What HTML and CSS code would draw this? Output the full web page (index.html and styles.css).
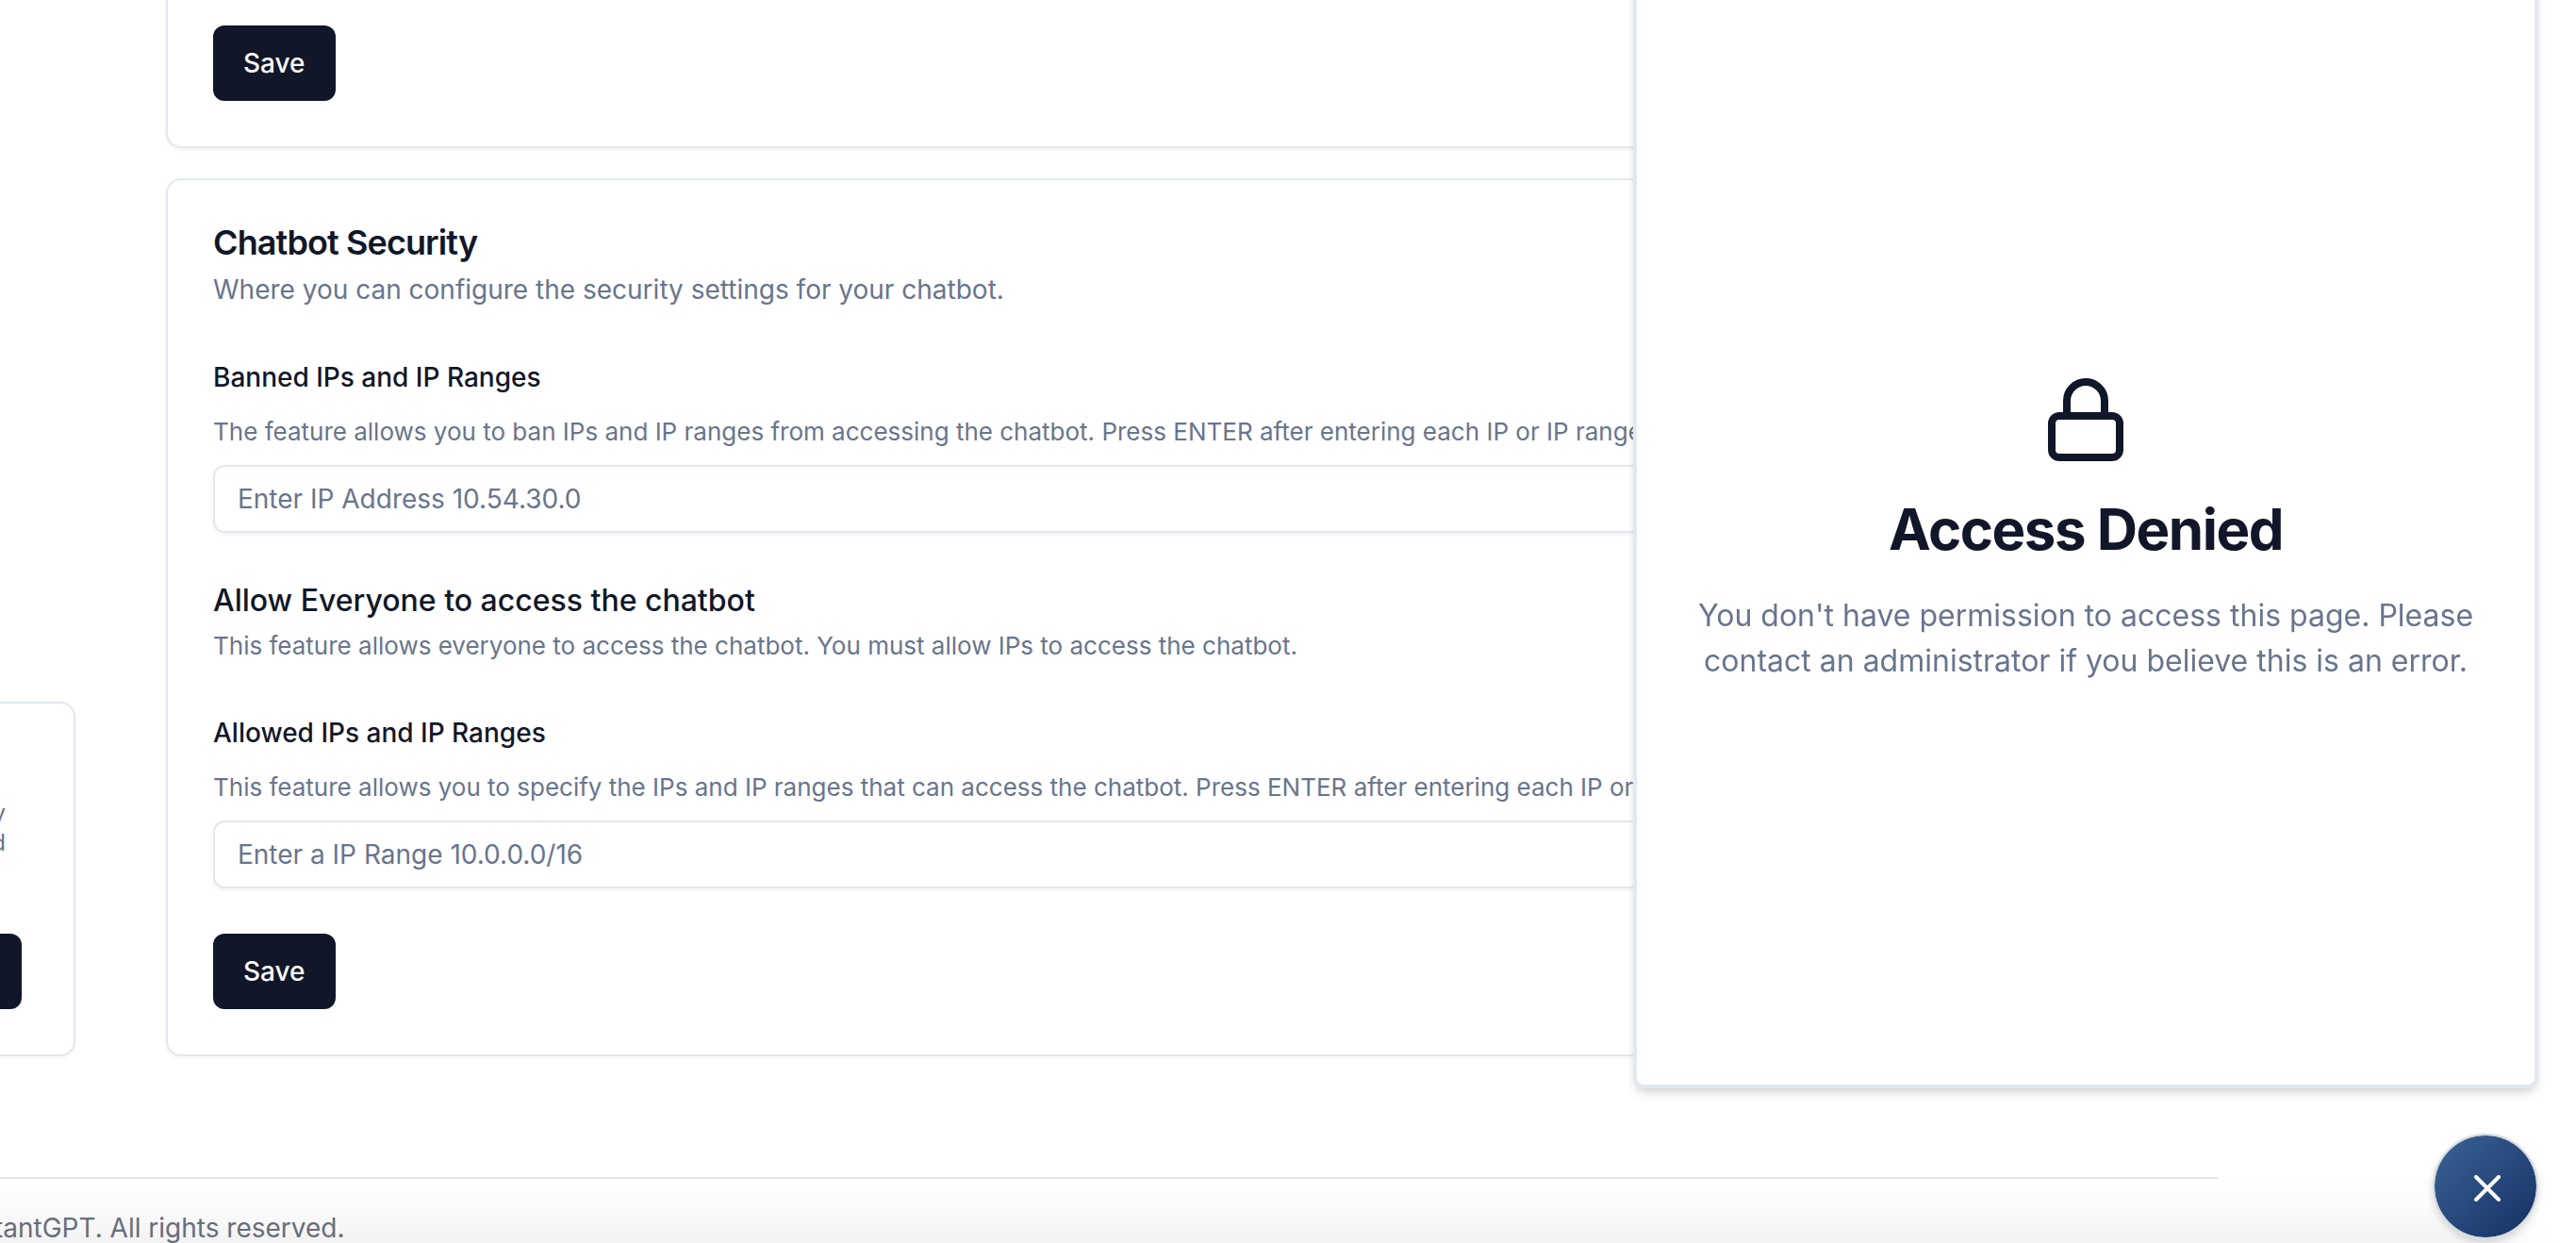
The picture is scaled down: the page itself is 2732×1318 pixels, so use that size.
FILE: index.html
```html
<!DOCTYPE html>
<html lang="en">
<head>
<meta charset="utf-8">
<title>Chatbot Settings</title>
<link rel="stylesheet" href="styles.css">
</head>
<body>
<div class="page">
  <div class="layout">
    <aside class="card promo">
      <p class="promo-text">y<br>d</p>
      <button class="btn btn-wide" type="button" aria-label="Upgrade"></button>
    </aside>
    <main class="sections">
      <section class="card card-continued">
        <button class="btn" type="submit">Save</button>
      </section>
      <form class="card">
        <header class="card-header">
          <h2 class="card-title">Chatbot Security</h2>
          <p class="card-subtitle">Where you can configure the security settings for your chatbot.</p>
        </header>
        <div class="field">
          <label class="label" for="banned">Banned IPs and IP Ranges</label>
          <p class="hint">The feature allows you to ban IPs and IP ranges from accessing the chatbot. Press ENTER after entering each IP or IP range to add it.</p>
          <input class="input" id="banned" type="text" placeholder="Enter IP Address 10.54.30.0">
        </div>
        <div class="option">
          <h3 class="option-title">Allow Everyone to access the chatbot</h3>
          <p class="hint">This feature allows everyone to access the chatbot. You must allow IPs to access the chatbot.</p>
        </div>
        <div class="field">
          <label class="label" for="allowed">Allowed IPs and IP Ranges</label>
          <p class="hint">This feature allows you to specify the IPs and IP ranges that can access the chatbot. Press ENTER after entering each IP or IP range to add it.</p>
          <input class="input" id="allowed" type="text" placeholder="Enter a IP Range 10.0.0.0/16">
        </div>
        <button class="btn" type="submit">Save</button>
      </form>
    </main>
  </div>
  <footer class="footer">
    <p class="copyright">tantGPT. All rights reserved.</p>
  </footer>
</div>
<div class="edge-shadow"></div>
<section class="chat-panel">
  <svg class="lock" viewBox="0 0 24 24" fill="none" stroke="currentColor" stroke-width="2" stroke-linecap="round" stroke-linejoin="round" aria-hidden="true">
    <rect x="3" y="11" width="18" height="11" rx="2"/>
    <path d="M7 11V7a5 5 0 0 1 10 0v4"/>
  </svg>
  <h1 class="denied-title">Access Denied</h1>
  <p class="denied-text">You don't have permission to access this page. Please contact an administrator if you believe this is an error.</p>
</section>
<button class="chat-toggle" type="button" aria-label="Close chat">
  <svg class="close" viewBox="0 0 28 28" fill="none" stroke="currentColor" stroke-width="4" stroke-linecap="round" aria-hidden="true">
    <path d="M2 2l24 24M26 2L2 26"/>
  </svg>
</button>
</body>
</html>
```
FILE: styles.css
```css
* { box-sizing: border-box; margin: 0; }

body {
  background: #fff;
  color: #111729;
  font-family: Inter, "Liberation Sans", sans-serif;
  font-size: 28px;
  line-height: 40px;
  min-height: 100vh;
  overflow: hidden;
}

.page { padding-right: 380px; }

.layout {
  display: grid;
  grid-template-columns: 80px minmax(0, 1fr);
  gap: 96px;
}

.sections {
  display: flex;
  flex-direction: column;
  gap: 32px;
}

.card {
  display: flex;
  flex-direction: column;
  align-items: flex-start;
  gap: 48px;
  padding: 48px;
  background: #fff;
  border: 2px solid #e2e8ee;
  border-radius: 16px;
  box-shadow: 0 2px 4px rgb(0 0 0 / 5%);
}

.card-continued {
  padding-top: 27px;
  border-top: 0;
  border-top-left-radius: 0;
  border-top-right-radius: 0;
}

.promo {
  align-self: end;
  justify-content: space-between;
  height: 376px;
  padding: 100px 55px 48px 0;
  border-left: 0;
  border-top-left-radius: 0;
  border-bottom-left-radius: 0;
}

.promo-text {
  width: 6px;
  display: flex;
  justify-content: flex-end;
  text-align: right;
  color: #68758d;
  font-size: 24px;
  line-height: 32px;
}

.btn {
  height: 80px;
  padding: 0 32px;
  border: 0;
  border-radius: 12px;
  background: #111729;
  color: #f8fafc;
  font: 500 28px/40px Inter, "Liberation Sans", sans-serif;
}

.btn-wide {
  width: 100%;
  padding: 0;
  border-top-left-radius: 0;
  border-bottom-left-radius: 0;
}

.card-header {
  display: flex;
  flex-direction: column;
  gap: 12px;
}

.card-title {
  font-size: 36px;
  font-weight: 600;
  line-height: 36px;
  letter-spacing: -0.025em;
}

.card-subtitle { color: #68758d; }

.field {
  display: flex;
  flex-direction: column;
  gap: 12px;
  width: 100%;
}

.label {
  font-weight: 500;
  line-height: 51px;
}

.hint {
  color: #68758d;
  font-size: 26px;
  line-height: 39px;
  white-space: nowrap;
}

.input {
  width: 100%;
  height: 72px;
  margin-top: 4px;
  padding: 0 24px;
  border: 2px solid #e2e8ee;
  border-radius: 12px;
  background: transparent;
  box-shadow: 0 2px 4px rgb(0 0 0 / 5%);
  color: inherit;
  font: 28px/40px Inter, "Liberation Sans", sans-serif;
}

.input::placeholder { color: #68758d; opacity: 1; }

.option {
  display: flex;
  flex-direction: column;
  gap: 4px;
}

.option-title {
  font-size: 32px;
  font-weight: 500;
  line-height: 48px;
}

.footer {
  margin-top: 128px;
  padding-top: 32px;
  border-top: 2px solid #e5e7eb;
  color: #6b7280;
}

.copyright {
  margin-left: -6px;
  white-space: nowrap;
}

/* soft shadow rising from the bottom edge of the window */
.edge-shadow {
  position: fixed;
  top: 100vh;
  right: 80px;
  left: -120px;
  height: 120px;
  box-shadow: 0 0 80px rgb(0 0 0 / 10%);
}

.chat-panel {
  position: fixed;
  right: 40px;
  bottom: 164px;
  display: flex;
  flex-direction: column;
  align-items: center;
  justify-content: center;
  gap: 32px;
  width: 960px;
  height: 90vh;
  padding: 0 60px;
  background: #fff;
  border: 4px solid #e2e8f0;
  border-radius: 12px;
  box-shadow: 0 8px 12px -2px rgb(0 0 0 / 10%), 0 4px 8px -2px rgb(0 0 0 / 10%);
  text-align: center;
}

.lock { width: 96px; height: 96px; }

.denied-title {
  font-size: 60px;
  font-weight: 700;
  line-height: 72px;
  letter-spacing: -0.025em;
}

.denied-text {
  color: #68758d;
  font-size: 32px;
  line-height: 48px;
}

.chat-toggle {
  position: fixed;
  right: 40px;
  bottom: 4px;
  display: grid;
  place-items: center;
  width: 112px;
  height: 112px;
  padding: 4px 0 0 4px;
  border: 2px solid #d5d9df;
  border-radius: 50%;
  background: linear-gradient(135deg, #3b6496, #152f62) padding-box;
  box-shadow: 0 4px 8px rgb(0 0 0 / 15%);
  color: #fff;
}

.close { width: 28px; height: 28px; }
```
